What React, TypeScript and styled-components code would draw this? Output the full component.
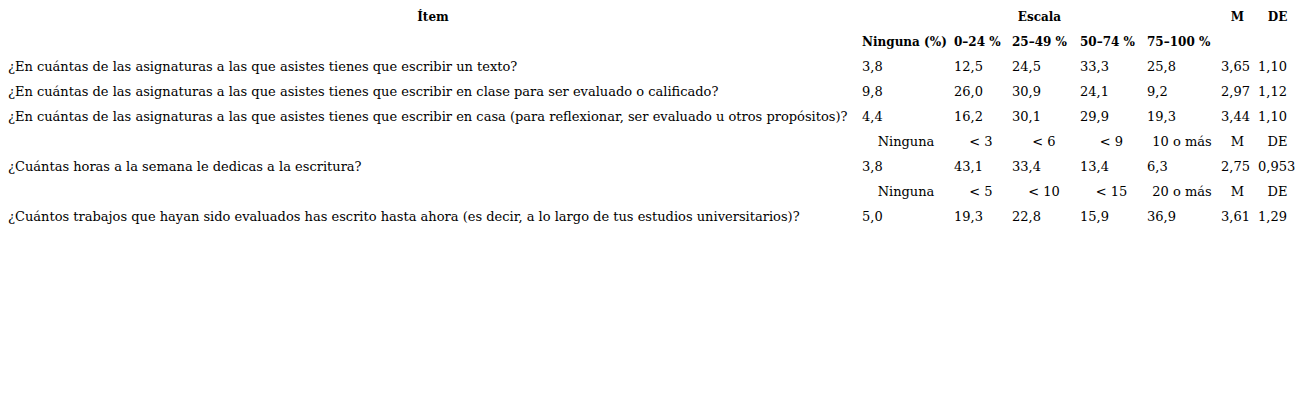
import React from 'react';
import styled, { createGlobalStyle } from 'styled-components';

const GlobalStyle = createGlobalStyle`
  body {
    margin: 4px 8px;
    background: #ffffff;
    color: #000000;
    font-family: "DejaVu Serif", "Liberation Serif", serif;
  }
`;

const Table = styled.table`
  border-collapse: collapse;
  table-layout: fixed;
  font-size: 13px;
`;

const Cell = styled.td<{ $center?: boolean }>`
  height: 25px;
  padding: 0 4px 0 0;
  white-space: nowrap;
  vertical-align: middle;
  text-align: ${(p) => (p.$center ? 'center' : 'left')};
  font-weight: 400;
`;

const HeadCell = styled.th<{ $align?: 'left' | 'center' }>`
  height: 25px;
  padding: 0 4px 0 0;
  white-space: nowrap;
  font-size: 12px;
  font-weight: 700;
  text-align: ${(p) => p.$align ?? 'center'};
`;

interface Row {
  item: string;
  values: string[];
}

interface Block {
  scale?: string[];
  rows: Row[];
}

const widths = [854, 92, 58, 68, 67, 74, 37, 43];

const blocks: Block[] = [
  {
    rows: [
      {
        item: '¿En cuántas de las asignaturas a las que asistes tienes que escribir un texto?',
        values: ['3,8', '12,5', '24,5', '33,3', '25,8', '3,65', '1,10'],
      },
      {
        item: '¿En cuántas de las asignaturas a las que asistes tienes que escribir en clase para ser evaluado o calificado?',
        values: ['9,8', '26,0', '30,9', '24,1', '9,2', '2,97', '1,12'],
      },
      {
        item: '¿En cuántas de las asignaturas a las que asistes tienes que escribir en casa (para reflexionar, ser evaluado u otros propósitos)?',
        values: ['4,4', '16,2', '30,1', '29,9', '19,3', '3,44', '1,10'],
      },
    ],
  },
  {
    scale: ['Ninguna', '< 3', '< 6', '< 9', '10 o más', 'M', 'DE'],
    rows: [
      {
        item: '¿Cuántas horas a la semana le dedicas a la escritura?',
        values: ['3,8', '43,1', '33,4', '13,4', '6,3', '2,75', '0,953'],
      },
    ],
  },
  {
    scale: ['Ninguna', '< 5', '< 10', '< 15', '20 o más', 'M', 'DE'],
    rows: [
      {
        item: '¿Cuántos trabajos que hayan sido evaluados has escrito hasta ahora (es decir, a lo largo de tus estudios universitarios)?',
        values: ['5,0', '19,3', '22,8', '15,9', '36,9', '3,61', '1,29'],
      },
    ],
  },
];

const App: React.FC = () => {
  return (
    <>
      <GlobalStyle />
      <Table>
        <colgroup>
          {widths.map((w, i) => (
            <col key={i} style={{ width: w }} />
          ))}
        </colgroup>
        <thead>
          <tr>
            <HeadCell>Ítem</HeadCell>
            <HeadCell colSpan={5}>Escala</HeadCell>
            <HeadCell>M</HeadCell>
            <HeadCell>DE</HeadCell>
          </tr>
          <tr>
            <HeadCell />
            <HeadCell $align="left">Ninguna (%)</HeadCell>
            <HeadCell $align="left">0–24 %</HeadCell>
            <HeadCell $align="left">25–49 %</HeadCell>
            <HeadCell $align="left">50–74 %</HeadCell>
            <HeadCell $align="left">75–100 %</HeadCell>
            <HeadCell />
            <HeadCell />
          </tr>
        </thead>
        <tbody>
          {blocks.map((block, bi) => (
            <React.Fragment key={bi}>
              {block.scale && (
                <tr>
                  <Cell />
                  {block.scale.map((s, si) => (
                    <Cell key={si} $center>
                      {s}
                    </Cell>
                  ))}
                </tr>
              )}
              {block.rows.map((row, ri) => (
                <tr key={ri}>
                  <Cell>{row.item}</Cell>
                  {row.values.map((v, vi) => (
                    <Cell key={vi}>{v}</Cell>
                  ))}
                </tr>
              ))}
            </React.Fragment>
          ))}
        </tbody>
      </Table>
    </>
  );
};

export default App;
